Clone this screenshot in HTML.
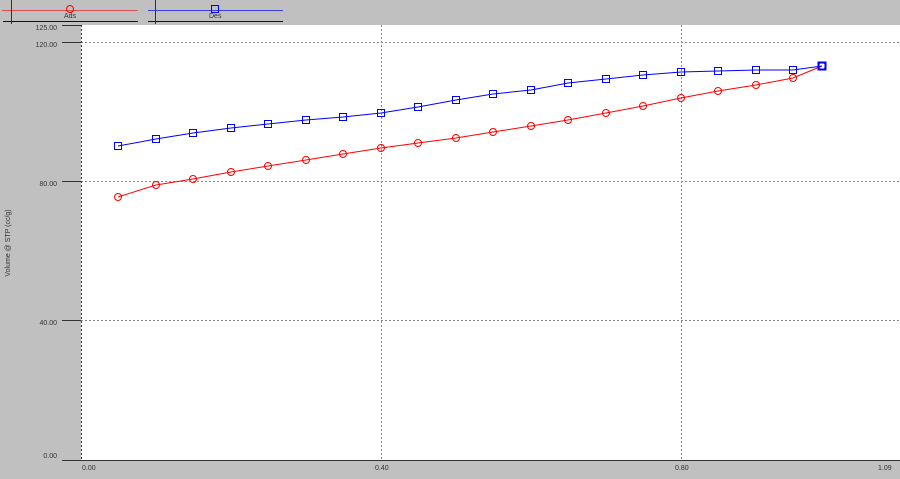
<!DOCTYPE html>
<html><head><style>
html,body{margin:0;padding:0;background:#c0c0c0;}
svg{display:block;}
text{font-family:"Liberation Sans",sans-serif;font-size:7px;fill:#333;}
</style></head><body>
<svg width="900" height="479" xmlns="http://www.w3.org/2000/svg">
<rect width="900" height="479" fill="#c0c0c0"/>
<!-- legend -->
<line x1="2" y1="10.5" x2="138" y2="10.5" stroke="#e05050" stroke-width="1"/>
<circle cx="70" cy="9" r="3.5" fill="none" stroke="#ff0000"/>
<line x1="11.5" y1="0" x2="11.5" y2="24" stroke="#333"/>
<line x1="3" y1="21.5" x2="138" y2="21.5" stroke="#111"/>
<text x="64" y="18">Ads</text>
<line x1="148" y1="10.5" x2="283" y2="10.5" stroke="#4040e0"/>
<rect x="211.5" y="5.5" width="7" height="7" fill="none" stroke="#0000ff"/>
<line x1="155.5" y1="0" x2="155.5" y2="24" stroke="#333"/>
<line x1="148" y1="21.5" x2="283" y2="21.5" stroke="#111"/>
<text x="209" y="18">Des</text>
<!-- plot area -->
<rect x="81" y="25" width="819" height="436" fill="#fff"/>
<g stroke="#888" stroke-dasharray="2,2" stroke-width="1">
<line x1="81" y1="42.5" x2="900" y2="42.5"/>
<line x1="81" y1="181.5" x2="900" y2="181.5"/>
<line x1="81" y1="320.5" x2="900" y2="320.5"/>
<line x1="381.5" y1="25" x2="381.5" y2="461"/>
<line x1="681.5" y1="25" x2="681.5" y2="461"/>
</g>
<line x1="81.5" y1="25" x2="81.5" y2="461" stroke="#333" stroke-dasharray="2,2"/>
<g stroke="#333">
<line x1="62" y1="25.5" x2="81" y2="25.5"/>
<line x1="62" y1="42.5" x2="81" y2="42.5"/>
<line x1="62" y1="181.5" x2="81" y2="181.5"/>
<line x1="62" y1="320.5" x2="81" y2="320.5"/>
<line x1="62" y1="460.5" x2="900" y2="460.5"/>
</g>
<g text-anchor="end">
<text x="57" y="30">125.00</text>
<text x="57" y="47">120.00</text>
<text x="57" y="186">80.00</text>
<text x="57" y="325">40.00</text>
<text x="57" y="458">0.00</text>
</g>
<text x="82" y="470">0.00</text>
<text x="375" y="470">0.40</text>
<text x="675" y="470">0.80</text>
<text x="878" y="470">1.09</text>
<text transform="translate(10,243) rotate(-90)" text-anchor="middle">Volume @ STP (cc/g)</text>
<!-- series -->
<polyline fill="none" stroke="#ff0000" points="118,197 156,185 193,179 231,172 268,166 306,160 343,154 381,148 418,143 456,138 493,132 531,126 568,120 606,113 643,106 681,98 718,91 756,85 793,78 822,66"/>
<g fill="none" stroke="#ff0000">
<circle cx="118" cy="197" r="3.5"/><circle cx="156" cy="185" r="3.5"/><circle cx="193" cy="179" r="3.5"/><circle cx="231" cy="172" r="3.5"/><circle cx="268" cy="166" r="3.5"/><circle cx="306" cy="160" r="3.5"/><circle cx="343" cy="154" r="3.5"/><circle cx="381" cy="148" r="3.5"/><circle cx="418" cy="143" r="3.5"/><circle cx="456" cy="138" r="3.5"/><circle cx="493" cy="132" r="3.5"/><circle cx="531" cy="126" r="3.5"/><circle cx="568" cy="120" r="3.5"/><circle cx="606" cy="113" r="3.5"/><circle cx="643" cy="106" r="3.5"/><circle cx="681" cy="98" r="3.5"/><circle cx="718" cy="91" r="3.5"/><circle cx="756" cy="85" r="3.5"/><circle cx="793" cy="78" r="3.5"/><circle cx="822" cy="66" r="3.5"/>
</g>
<polyline fill="none" stroke="#0000ff" points="118,146 156,139 193,133 231,128 268,124 306,120 343,117 381,113 418,107 456,100 493,94 531,90 568,83 606,79 643,75 681,72 718,71 756,70 793,70 822,66"/>
<g fill="none" stroke="#0000ff">
<rect x="114.5" y="142.5" width="7" height="7"/><rect x="152.5" y="135.5" width="7" height="7"/><rect x="189.5" y="129.5" width="7" height="7"/><rect x="227.5" y="124.5" width="7" height="7"/><rect x="264.5" y="120.5" width="7" height="7"/><rect x="302.5" y="116.5" width="7" height="7"/><rect x="339.5" y="113.5" width="7" height="7"/><rect x="377.5" y="109.5" width="7" height="7"/><rect x="414.5" y="103.5" width="7" height="7"/><rect x="452.5" y="96.5" width="7" height="7"/><rect x="489.5" y="90.5" width="7" height="7"/><rect x="527.5" y="86.5" width="7" height="7"/><rect x="564.5" y="79.5" width="7" height="7"/><rect x="602.5" y="75.5" width="7" height="7"/><rect x="639.5" y="71.5" width="7" height="7"/><rect x="677.5" y="68.5" width="7" height="7"/><rect x="714.5" y="67.5" width="7" height="7"/><rect x="752.5" y="66.5" width="7" height="7"/><rect x="789.5" y="66.5" width="7" height="7"/><rect x="818.5" y="62.5" width="7" height="7" stroke-width="2"/>
</g>
</svg>
</body></html>
